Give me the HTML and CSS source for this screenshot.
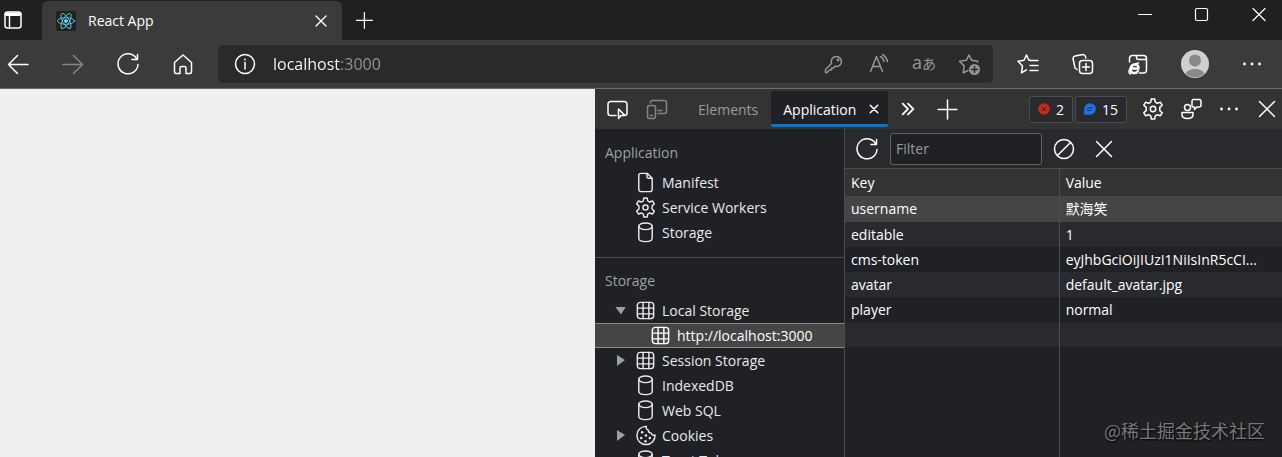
FILE: index.html
```html
<!DOCTYPE html>
<html lang="en">
  <head>
    <meta charset="UTF-8" />
    <meta name="viewport" content="width=device-width, initial-scale=1.0" />
    <title>React App</title>
    <link rel="stylesheet" href="styles.css">
  </head>
  <body>
    <!-- Shared icons -->
    <svg class="sprite" aria-hidden="true">
      <symbol id="close" viewBox="0 0 24 24"><path d="M4.500 4.500l15 15M19.500 4.500l-15 15" /></symbol>
      <symbol id="plus" viewBox="0 0 24 24"><path d="M12.500 3v19M3 12.500h19" /></symbol>
      <symbol id="reload" viewBox="0 0 24 24"><path d="M20.500 6.500A10 10 0 1 0 22 12.500M21.500 2.500v5h-5.500" /></symbol>
      <symbol id="dots" viewBox="0 0 24 24"><g class="solid"><circle cx="4.500" cy="12" r="1.400" /><circle cx="12" cy="12" r="1.400" /><circle cx="19.500" cy="12" r="1.400" /></g></symbol>
      <symbol id="gear" viewBox="0 0 24 24">
        <path d="M9.700 5.200l.6-3.200h3.400l.6 3.200 2 1.100 3-1.100 1.900 3-2.400 2.200v3.200l2.400 2.200-1.900 3-3-1.100-2 1.100-.6 3.200h-3.400l-.6-3.200-2-1.100-3 1.100-1.900-3 2.400-2.200v-3.200L2.800 8.200l1.900-3 3 1.100z" />
        <circle cx="12" cy="12" r="2.700" />
      </symbol>
      <symbol id="grid" viewBox="0 0 24 24"><rect x="3.500" y="3.500" width="17" height="17" rx="3" /><path d="M9.500 3.500v17M15.500 3.500v17M3.500 9.500h17M3.500 15.500h17" /></symbol>
      <symbol id="database" viewBox="0 0 24 24"><ellipse cx="12" cy="5.500" rx="7" ry="3.500" /><path d="M5 5.500v12.500c0 2 3 3.500 7 3.500s7-1.500 7-3.500V5.500" /></symbol>
    </svg>

    <header>
      <div class="tab-bar">
        <button class="icon-btn" aria-label="Tab actions">
          <svg viewBox="0 0 24 24"><rect x="4" y="4" width="16" height="16" rx="2.500" /><path d="M4 6.500h16M8.500 8v12" /><path d="M5 4.500h14v3.500H5z" class="solid" /></svg>
        </button>
        <div class="browser-tab">
          <svg class="favicon" viewBox="0 0 20 20">
            <rect width="20" height="20" rx="2" />
            <g><ellipse cx="10" cy="10" rx="8.500" ry="3.300" /><ellipse cx="10" cy="10" rx="8.500" ry="3.300" transform="rotate(60 10 10)" /><ellipse cx="10" cy="10" rx="8.500" ry="3.300" transform="rotate(120 10 10)" /></g>
            <circle cx="10" cy="10" r="1.600" />
          </svg>
          <span class="tab-title">React App</span>
          <button class="icon-btn small" aria-label="Close tab"><svg><use href="#close" /></svg></button>
        </div>
        <button class="icon-btn medium" aria-label="New tab"><svg><use href="#plus" /></svg></button>
        <div class="window-controls">
          <button class="icon-btn medium" aria-label="Minimize"><svg viewBox="0 0 20 20"><path d="M3.500 9.500h13" /></svg></button>
          <button class="icon-btn medium" aria-label="Maximize"><svg viewBox="0 0 20 20"><rect x="3.500" y="3.500" width="12" height="12" rx="1.500" /></svg></button>
          <button class="icon-btn medium" aria-label="Close window"><svg viewBox="0 0 20 20"><path d="M4 3.500l12 12M16 3.500l-12 12" /></svg></button>
        </div>
      </div>

      <div class="toolbar">
        <nav class="nav-buttons">
          <button class="icon-btn" aria-label="Back"><svg viewBox="0 0 24 24"><path d="M22 12.500H2.500M11.500 3.500l-9 9 9 9" /></svg></button>
          <button class="icon-btn dim" aria-label="Forward"><svg viewBox="0 0 24 24"><path d="M2 12.500h19.500M12.500 3.500l9 9-9 9" /></svg></button>
          <button class="icon-btn" aria-label="Refresh"><svg><use href="#reload" /></svg></button>
          <button class="icon-btn" aria-label="Home"><svg viewBox="0 0 24 24"><path d="M3.500 10.500L12 3l8.500 7.500V20a1.500 1.500 0 0 1-1.500 1.500h-4V16a1.500 1.500 0 0 0-1.500-1.500h-3A1.500 1.500 0 0 0 9 16v5.500H5A1.500 1.500 0 0 1 3.500 20z" /></svg></button>
        </nav>
        <div class="address-bar">
          <button class="icon-btn" aria-label="Site information"><svg viewBox="0 0 24 24"><circle cx="12" cy="12" r="9.500" /><path d="M12 10.500v6.500" /><circle cx="12" cy="7.500" r=".9" class="solid" /></svg></button>
          <input type="text" class="address" value="localhost:3000" aria-label="Address" />
          <div class="address-actions">
            <button class="icon-btn" aria-label="Passwords"><svg viewBox="0 0 24 24"><path d="M14.500 4.500a5 5 0 1 1-1.500 9.800L11.500 16h-2v2h-2l-2.500 2.500H3.500V17.500l6-6A5.200 5.200 0 0 1 14.500 4.500z" /><circle cx="16" cy="8" r=".7" /></svg></button>
            <button class="icon-btn" aria-label="Read aloud"><svg viewBox="0 0 24 24"><path d="M3.500 19.500L9.500 4.500l6 15M5.500 14.500h8M13.500 4.500a7 7 0 0 1 3.500 5M15.500 2.500a11 11 0 0 1 5 7" /></svg></button>
            <button class="icon-btn translate" aria-label="Translate">a<span>あ</span></button>
            <button class="icon-btn" aria-label="Add to favorites"><svg viewBox="0 0 24 24"><path d="M20.500 10l.5-.8-6.300-.9L12 3 9.300 8.300l-6.800.9 4.700 4.700-1 7L11 18.500" /><circle cx="17.500" cy="17.500" r="5.500" class="solid" /><path d="M17.500 14.500v6M14.500 17.500h6" class="cutout" /></svg></button>
          </div>
        </div>
        <div class="browser-actions">
          <button class="icon-btn" aria-label="Favorites"><svg viewBox="0 0 24 24"><path d="M15 8.500L12.700 8 10.500 3 8 8.300l-6 .9 4.500 4.700-1 7 5-3M15 8.500h7M14 13.500h8M14 18.500h8" /></svg></button>
          <button class="icon-btn" aria-label="Collections"><svg viewBox="0 0 24 24"><rect x="8.500" y="8.500" width="13" height="13" rx="3" /><path d="M15 11.500v7M11.500 15h7M6 17.500L4 16 2 6.500Q2 4.500 4 4l8-1.500q2 0 2.500 2l.3 1.500" /></svg></button>
          <button class="icon-btn" aria-label="Internet Explorer mode"><svg viewBox="0 0 24 24"><path d="M3.500 10V6.500A3 3 0 0 1 6.500 3.500h11a3 3 0 0 1 3 3V18a3 3 0 0 1-3 3h-4M10.500 3.500v2a2 2 0 0 0 2 2h8" /><path d="M4.500 16.500h8c.5-5.500-7-5.500-8 0-.5 5.500 6 5.500 7.500 2.500" class="thick" /><path d="M4.500 22c-4-1 0-9.500 8-11" /></svg></button>
          <button class="icon-btn profile" aria-label="Profile"><svg viewBox="0 0 28 28"><circle cx="14" cy="14" r="14" class="disc" /><circle cx="14" cy="10.500" r="6" /><path d="M4.500 23.500q3-4.500 9.500-4.500t9.500 4.500A14 14 0 0 1 4.500 23.500z" /></svg></button>
          <button class="icon-btn" aria-label="Settings and more"><svg><use href="#dots" /></svg></button>
        </div>
      </div>
    </header>

    <div class="content">
      <main class="page"></main>

      <section class="devtools">
        <div class="devtools-bar">
          <div class="inspect-tools">
            <button class="icon-btn" aria-label="Inspect element"><svg viewBox="0 0 24 24"><path d="M10 18.500H4.500A2.500 2.500 0 0 1 2 16V7A2.500 2.500 0 0 1 4.500 4.500h14A2.500 2.500 0 0 1 21 7v9a2.500 2.500 0 0 1-2 2.500M12.500 12v9.500l2.500-3h4z" /></svg></button>
            <button class="icon-btn dim" aria-label="Toggle device emulation"><svg viewBox="0 0 24 24"><rect x="2.500" y="8.500" width="8" height="13" rx="2" /><path d="M5.500 6V5A2 2 0 0 1 7.500 3.500h12A2 2 0 0 1 21.500 5.500v9a2 2 0 0 1-2 2H13M13 13.500h4M5.500 18.500h2" /></svg></button>
          </div>
          <button class="panel-tab">Elements</button>
          <div class="panel-tab active">
            <button>Application</button>
            <button class="icon-btn tiny" aria-label="Close Application"><svg><use href="#close" /></svg></button>
          </div>
          <button class="icon-btn small more" aria-label="More tabs"><svg viewBox="0 0 18 18"><path d="M3 3l6 6-6 6M9 3l6 6-6 6" /></svg></button>
          <button class="icon-btn add" aria-label="More tools"><svg><use href="#plus" /></svg></button>
          <div class="devtools-actions">
            <div class="counters">
              <button class="counter"><svg viewBox="0 0 12 12"><circle cx="6" cy="6" r="5.800" class="error" /><path d="M4.300 4.300l3.400 3.400M7.700 4.300L4.300 7.700" class="mark" /></svg>2</button>
              <button class="counter"><svg viewBox="0 0 12 12"><path d="M.2 11.800V6A5.800 5.800 0 1 1 6 11.800z" class="issue" /><path d="M3.500 5h5M3.500 7.500h3.500" class="mark" /></svg>15</button>
            </div>
            <button class="icon-btn" aria-label="Settings"><svg><use href="#gear" /></svg></button>
            <button class="icon-btn" aria-label="Send feedback"><svg viewBox="0 0 24 24"><circle cx="8.500" cy="10.500" r="3" /><path d="M3 15.500h11v2q0 4-5.500 4T3 17.500zM14 2.500h6a2 2 0 0 1 2 2V8a2 2 0 0 1-2 2h-2l-2.500 2.500V10H14a1 1 0 0 1-1-1V4.500a2 2 0 0 1 1-2z" /></svg></button>
            <button class="icon-btn" aria-label="Customize"><svg><use href="#dots" /></svg></button>
            <button class="icon-btn" aria-label="Close DevTools"><svg><use href="#close" /></svg></button>
          </div>
        </div>

        <div class="panel">
          <aside class="sidebar">
            <h2>Application</h2>
            <ul>
              <li><button class="tree-item"><svg viewBox="0 0 24 24"><path d="M7 2.500h7l5 5V19a2.500 2.500 0 0 1-2.500 2.500h-9A2.500 2.500 0 0 1 5 19V4.500a2 2 0 0 1 2-2zM13.500 2.500V6A1.500 1.500 0 0 0 15 7.500h4" /></svg>Manifest</button></li>
              <li><button class="tree-item"><svg><use href="#gear" /></svg>Service Workers</button></li>
              <li><button class="tree-item"><svg><use href="#database" /></svg>Storage</button></li>
            </ul>
            <h2 class="divided">Storage</h2>
            <ul>
              <li><button class="tree-item open"><svg><use href="#grid" /></svg>Local Storage</button></li>
              <li><button class="tree-item child selected"><svg><use href="#grid" /></svg>http://localhost:3000</button></li>
              <li><button class="tree-item closed"><svg><use href="#grid" /></svg>Session Storage</button></li>
              <li><button class="tree-item"><svg><use href="#database" /></svg>IndexedDB</button></li>
              <li><button class="tree-item"><svg><use href="#database" /></svg>Web SQL</button></li>
              <li><button class="tree-item closed"><svg viewBox="0 0 24 24"><path d="M13 2.500a9.500 9.500 0 1 0 9 9q-3 1-4-2-3 0-3-3-3-1-2-4z" /><g class="solid"><circle cx="8.500" cy="8.500" r="1.300" /><circle cx="12.500" cy="12" r="1.300" /><circle cx="7.500" cy="14.500" r="1.300" /><circle cx="16.500" cy="14.500" r="1.300" /><circle cx="12" cy="18" r="1.300" /></g></svg>Cookies</button></li>
              <li><button class="tree-item"><svg><use href="#database" /></svg>Trust Tokens</button></li>
            </ul>
          </aside>

          <div class="storage-view">
            <div class="storage-toolbar">
              <button class="icon-btn" aria-label="Refresh items"><svg><use href="#reload" /></svg></button>
              <input type="text" class="filter" placeholder="Filter" aria-label="Filter" />
              <button class="icon-btn" aria-label="Clear all"><svg viewBox="0 0 24 24"><circle cx="12" cy="12" r="9.500" /><path d="M5.500 18.500l13-13" /></svg></button>
              <button class="icon-btn delete" aria-label="Delete selected"><svg><use href="#close" /></svg></button>
            </div>
            <table>
              <thead>
                <tr><th>Key</th><th>Value</th></tr>
              </thead>
              <tbody>
                <tr class="selected"><td>username</td><td>默海笑</td></tr>
                <tr><td>editable</td><td>1</td></tr>
                <tr><td>cms-token</td><td>eyJhbGciOiJIUzI1NiIsInR5cCI...</td></tr>
                <tr><td>avatar</td><td>default_avatar.jpg</td></tr>
                <tr><td>player</td><td>normal</td></tr>
                <tr><td></td><td></td></tr>
                <tr class="filler"><td></td><td></td></tr>
              </tbody>
            </table>
            <div class="watermark">@稀土掘金技术社区</div>
          </div>
        </div>
      </section>
    </div>
  </body>
</html>
```
FILE: styles.css
```css
* {
  box-sizing: border-box;
}
body {
  display: flex;
  flex-direction: column;
  height: 100vh;
  margin: 0;
  overflow: hidden;
  background: #202124;
  color: #fff;
  font-family: "Open Sans", "Noto Sans CJK SC", sans-serif;
  font-size: 14px;
}
button {
  padding: 0;
  border: none;
  background: none;
  color: inherit;
  font: inherit;
  cursor: pointer;
}
svg {
  display: block;
  flex: none;
  fill: none;
  stroke: currentColor;
  stroke-width: 1.5;
  stroke-linecap: round;
  stroke-linejoin: round;
}
.sprite {
  display: none;
}
.solid {
  fill: currentColor;
  stroke: none;
}
.cutout {
  stroke: #2a2a2a;
}
.thick {
  stroke-width: 2.5;
}
.icon-btn {
  flex: none;
  width: 24px;
  height: 24px;
}
.icon-btn svg {
  width: 100%;
  height: 100%;
}
.icon-btn.medium {
  width: 20px;
  height: 20px;
}
.icon-btn.small {
  width: 16px;
  height: 16px;
}
.icon-btn.small svg {
  stroke-width: 2;
}
.icon-btn.tiny {
  width: 12px;
  height: 12px;
}
.icon-btn.tiny svg {
  stroke-width: 3;
}
.dim {
  color: #858585;
}

/* Browser tabs */
.tab-bar {
  display: flex;
  align-items: center;
  height: 40px;
  padding: 0 13px 0 1px;
  background: #202020;
}
.browser-tab {
  display: flex;
  align-items: center;
  align-self: flex-end;
  width: 300px;
  height: 39px;
  margin: 0 12px 0 17px;
  padding: 0 13px 0 14px;
  border-radius: 6px 6px 0 0;
  background: #3b3b3b;
}
.favicon {
  width: 20px;
  height: 20px;
  stroke: #61dafb;
  stroke-width: 0.8;
}
.favicon rect {
  fill: #202020;
  stroke: none;
}
.favicon circle {
  fill: #61dafb;
}
.tab-title {
  flex: 1;
  margin-left: 12px;
}
.window-controls {
  display: flex;
  align-self: flex-start;
  gap: 37px;
  margin: 5px 0 0 auto;
}
.window-controls svg {
  stroke-width: 1.2;
}

/* Address toolbar */
.toolbar {
  display: flex;
  align-items: center;
  height: 49px;
  padding: 0 18px 0 6px;
  border-bottom: 1px solid #6b6b6b;
  background: #3b3b3b;
}
.nav-buttons,
.browser-actions {
  display: flex;
  align-items: center;
  gap: 31px;
}
.address-bar {
  display: flex;
  flex: 1;
  align-items: center;
  height: 38px;
  margin: 0 23px;
  padding: 0 12px 0 15px;
  border-radius: 5px;
  background: #2a2a2a;
}
.address {
  flex: 1;
  min-width: 0;
  margin-left: 16px;
  padding: 0;
  border: none;
  outline: none;
  /* host in white, port in grey */
  background: linear-gradient(to right, #fff 67px, #949494 67px);
  background-clip: text;
  color: transparent;
  font: inherit;
  font-size: 16px;
}
.address-actions {
  display: flex;
  gap: 21px;
  color: #969696;
}
.translate {
  display: flex;
  align-items: baseline;
  justify-content: center;
  font-size: 18px;
  line-height: 20px;
}
.translate span {
  font-size: 14px;
}
.profile {
  width: 28px;
  height: 28px;
}
.profile svg {
  fill: #8a8784;
  stroke: none;
}
.profile .disc {
  fill: #d2d0ce;
}

.content {
  display: flex;
  flex: 1;
  min-height: 0;
}
.page {
  flex: 595;
  background: #efefef;
}

/* DevTools */
.devtools {
  display: flex;
  flex: 687;
  flex-direction: column;
  min-width: 0;
}
.devtools-bar {
  display: flex;
  align-items: center;
  height: 40px;
  padding: 0 3px 0 11px;
  background: #333;
}
.inspect-tools {
  display: flex;
  gap: 15px;
  margin-right: 16px;
}
.panel-tab {
  height: 36px;
  padding: 0 13px;
  color: #9a9a9a;
}
.panel-tab.active {
  display: flex;
  align-items: center;
  gap: 12px;
  padding: 3px 8px 0 12px;
  border-bottom: 3px solid #0078d4;
  border-radius: 2px;
  background: #202124;
  color: #fff;
}
.more {
  margin: 0 19px 0 12px;
}
.devtools-actions {
  display: flex;
  align-items: center;
  gap: 14px;
  margin-left: auto;
}
.counters {
  display: flex;
  gap: 2px;
}
.counter {
  display: flex;
  align-items: center;
  gap: 6px;
  height: 27px;
  padding: 0 8px;
  border: 1px solid #494c50;
  border-radius: 2px;
  background: #292a2d;
}
.counter svg {
  width: 12px;
  height: 12px;
  stroke: none;
}
.counter .error {
  fill: #c5291c;
}
.counter .issue {
  fill: #1a73e8;
}
.counter .mark {
  stroke: #292a2d;
  stroke-width: 1;
}
.panel {
  display: flex;
  flex: 1;
  min-height: 0;
}

/* Sidebar tree */
.sidebar {
  flex: none;
  width: 250px;
  overflow: hidden;
  border-right: 1px solid #494c50;
}
.sidebar h2 {
  margin: 0;
  padding: 12px 10px 5px;
  color: #9aa0a6;
  font-size: 14px;
  font-weight: 400;
  line-height: 24px;
}
.sidebar .divided {
  margin-top: 12px;
  padding-top: 11px;
  border-top: 1px solid #494c50;
}
.sidebar ul {
  margin: 0;
  padding: 0;
  list-style: none;
}
.tree-item {
  display: flex;
  align-items: center;
  gap: 5px;
  width: 100%;
  height: 25px;
  padding-left: 39px;
  color: #e8eaed;
}
.tree-item svg {
  width: 23px;
  height: 23px;
}
.tree-item.open,
.tree-item.closed {
  padding-left: 20px;
}
.tree-item.open::before,
.tree-item.closed::before {
  width: 14px;
  content: "";
}
.tree-item.open::before {
  height: 8px;
  background: #9aa0a6;
  clip-path: polygon(0 0, 11px 0, 6px 8px);
}
.tree-item.closed::before {
  height: 11px;
  background: #9aa0a6;
  clip-path: polygon(2px 0, 10px 5px, 2px 11px);
}
.tree-item.child {
  padding-left: 54px;
}
.tree-item.selected {
  border: solid #8a8a8a;
  border-width: 1px 0;
  background: #454545;
  color: #fff;
}

/* Storage items */
.storage-view {
  position: relative;
  display: flex;
  flex: 1;
  flex-direction: column;
  min-width: 0;
}
.storage-toolbar {
  display: flex;
  flex: none;
  align-items: center;
  height: 40px;
  padding-left: 10px;
  border-bottom: 1px solid #494c50;
  background: #292a2d;
}
.filter {
  width: 152px;
  height: 32px;
  margin: 0 10px 0 11px;
  padding: 0 5px;
  border: 1px solid #5f6164;
  border-radius: 3px;
  background: #202124;
  color: #fff;
  font: inherit;
}
.filter::placeholder {
  color: #9a9a9a;
}
.delete {
  margin-left: 16px;
}
table {
  flex: 1;
  width: 100%;
  height: 100%;
  border-collapse: collapse;
  table-layout: fixed;
}
th,
td {
  height: 25px;
  padding: 0 5px 0 6px;
  overflow: hidden;
  font-weight: 400;
  line-height: 20px;
  text-align: left;
  text-overflow: ellipsis;
  white-space: nowrap;
}
th:first-child,
td:first-child {
  width: 49%;
  border-right: 1px solid #494c50;
}
thead {
  background: #333;
}
th {
  height: 27px;
}
tbody tr:nth-child(even) {
  background: #292a2d;
}
tbody .selected {
  background: #454545;
}
.selected td {
  height: 26px;
}
.filler td {
  height: auto;
}
.watermark {
  position: absolute;
  right: 17px;
  bottom: 14px;
  color: #77787a;
  font-family: "Noto Sans CJK SC", sans-serif;
  font-size: 18px;
  text-shadow: 1px 1px 2px #000;
}
```
